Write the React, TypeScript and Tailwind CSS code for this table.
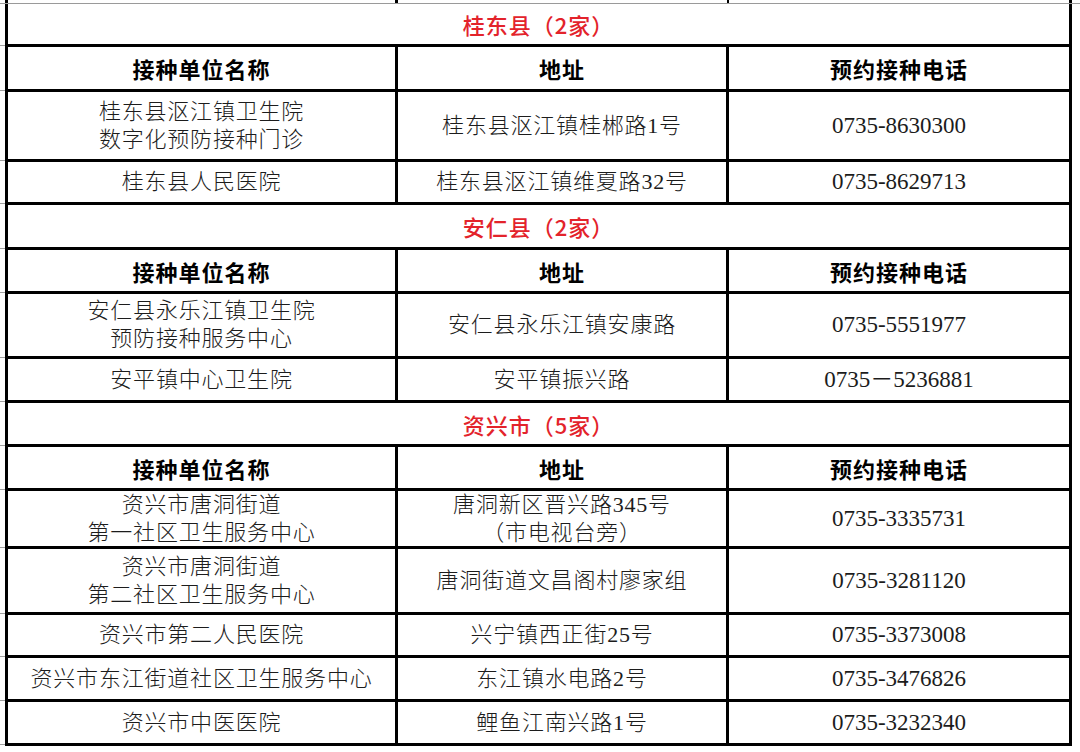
import React from 'react';

interface Entry {
    name: string[];
    addr: string[];
    phone: string;
    h: string;
}

interface Block {
    title: string;
    titleH: string;
    headH: string;
    rows: Entry[];
}

const blocks: Block[] = [
    {
        title: '桂东县（2家）',
        titleH: 'h-[44px] border-t border-t-[#9a9a9a]',
        headH: 'h-[45px]',
        rows: [
            { name: ['桂东县沤江镇卫生院', '数字化预防接种门诊'], addr: ['桂东县沤江镇桂郴路1号'], phone: '0735-8630300', h: 'h-[70px]' },
            { name: ['桂东县人民医院'], addr: ['桂东县沤江镇维夏路32号'], phone: '0735-8629713', h: 'h-[43px]' },
        ],
    },
    {
        title: '安仁县（2家）',
        titleH: 'h-[45px]',
        headH: 'h-[44px]',
        rows: [
            { name: ['安仁县永乐江镇卫生院', '预防接种服务中心'], addr: ['安仁县永乐江镇安康路'], phone: '0735-5551977', h: 'h-[65px]' },
            { name: ['安平镇中心卫生院'], addr: ['安平镇振兴路'], phone: '0735－5236881', h: 'h-[44px]' },
        ],
    },
    {
        title: '资兴市（5家）',
        titleH: 'h-[44px]',
        headH: 'h-[44px]',
        rows: [
            { name: ['资兴市唐洞街道', '第一社区卫生服务中心'], addr: ['唐洞新区晋兴路345号', '（市电视台旁）'], phone: '0735-3335731', h: 'h-[58px]' },
            { name: ['资兴市唐洞街道', '第二社区卫生服务中心'], addr: ['唐洞街道文昌阁村廖家组'], phone: '0735-3281120', h: 'h-[66px]' },
            { name: ['资兴市第二人民医院'], addr: ['兴宁镇西正街25号'], phone: '0735-3373008', h: 'h-[43px]' },
            { name: ['资兴市东江街道社区卫生服务中心'], addr: ['东江镇水电路2号'], phone: '0735-3476826', h: 'h-[44px]' },
            { name: ['资兴市中医医院'], addr: ['鲤鱼江南兴路1号'], phone: '0735-3232340', h: 'h-[44px]' },
        ],
    },
];

const body = "font-['Liberation_Serif','Noto_Sans_CJK_SC',serif] font-light text-[22px] leading-[28px] tracking-[0.8px] text-[#1c1c1c]";
const bold = "font-['Noto_Sans_CJK_SC',sans-serif] font-bold text-[22px] leading-[28px] tracking-[1px] text-black";

const Gutter = () => (
    <div className="w-[5px] shrink-0 flex flex-col justify-end">
        <div className="h-px bg-[#a0a0a0] mb-px" />
    </div>
);

const Line: React.FunctionComponent<{ h: string; cells: React.ReactNode[]; cls?: string }> = (props) => {
    return (
        <div className={`flex ${props.h}`}>
            <Gutter />
            <div className="w-[1067px] shrink-0 grid grid-cols-[390px_331px_1fr] border-x-[3px] border-b-[3px] border-black">
                {props.cells.map((c, i) => (
                    <div key={i} className={`flex flex-col items-center justify-center text-center ${i < 2 ? 'border-r-[3px] border-black' : ''} ${props.cls || ''}`}>
                        {c}
                    </div>
                ))}
            </div>
        </div>
    );
};

const App: React.FunctionComponent = () => {
    return (
        <div className="min-h-screen w-[1080px] bg-white overflow-hidden">
            {/* bottom of the previous table */}
            <div className="flex h-[3px]">
                <div className="w-[5px] shrink-0" />
                <div className="w-[1067px] shrink-0 grid grid-cols-[390px_331px_1fr] border-x-[3px] border-black">
                    <div className="border-r-[3px] border-black" />
                    <div className="border-r-[2px] border-black" />
                    <div />
                </div>
            </div>
            {blocks.map((b, bi) => (
                <React.Fragment key={bi}>
                    <div className={`flex ${b.titleH}`}>
                        <Gutter />
                        <div className="w-[1067px] shrink-0 flex items-center justify-center border-x-[3px] border-b-[3px] border-black">
                            <span className="font-['Noto_Sans_CJK_SC',sans-serif] font-medium text-[22px] leading-[28px] tracking-[1px] text-[#e3232b]">{b.title}</span>
                        </div>
                    </div>
                    <Line
                        h={b.headH}
                        cls={bold}
                        cells={[<span>接种单位名称</span>, <span>地址</span>, <span>预约接种电话</span>]}
                    />
                    {b.rows.map((r, ri) => (
                        <Line
                            key={ri}
                            h={r.h}
                            cls={body}
                            cells={[
                                <>{r.name.map((t, k) => <div key={k}>{t}</div>)}</>,
                                <>{r.addr.map((t, k) => <div key={k}>{t}</div>)}</>,
                                <div className="font-['Liberation_Serif','Noto_Sans_CJK_SC',serif] font-normal text-[23px] tracking-normal">{r.phone}</div>,
                            ]}
                        />
                    ))}
                </React.Fragment>
            ))}
        </div>
    );
};

export default App;
